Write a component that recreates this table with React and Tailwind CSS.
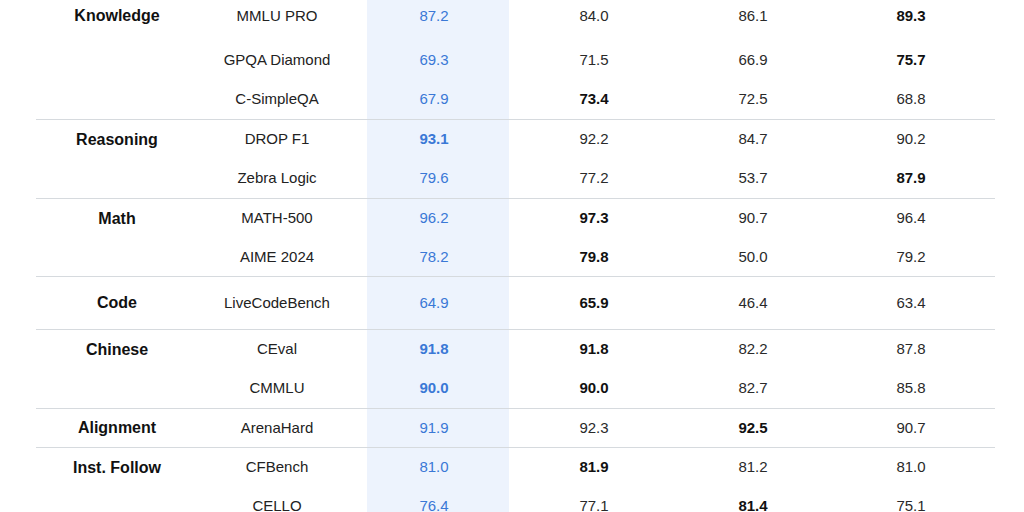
const groups = [
  {
    name: "Knowledge",
    rows: [
      { bench: "MMLU PRO", h: "h-[41px]", pad: "pb-[9px]", vals: ["87.2", "84.0", "86.1", "89.3"], bold: [3] },
      { bench: "GPQA Diamond", vals: ["69.3", "71.5", "66.9", "75.7"], bold: [3] },
      { bench: "C-SimpleQA", vals: ["67.9", "73.4", "72.5", "68.8"], bold: [1] },
    ],
  },
  {
    name: "Reasoning",
    rows: [
      { bench: "DROP F1", vals: ["93.1", "92.2", "84.7", "90.2"], bold: [0] },
      { bench: "Zebra Logic", vals: ["79.6", "77.2", "53.7", "87.9"], bold: [3] },
    ],
  },
  {
    name: "Math",
    rows: [
      { bench: "MATH-500", vals: ["96.2", "97.3", "90.7", "96.4"], bold: [1] },
      { bench: "AIME 2024", h: "h-[38px]", vals: ["78.2", "79.8", "50.0", "79.2"], bold: [1] },
    ],
  },
  {
    name: "Code",
    rows: [{ bench: "LiveCodeBench", h: "h-[52px]", vals: ["64.9", "65.9", "46.4", "63.4"], bold: [1] }],
  },
  {
    name: "Chinese",
    rows: [
      { bench: "CEval", vals: ["91.8", "91.8", "82.2", "87.8"], bold: [0, 1] },
      { bench: "CMMLU", vals: ["90.0", "90.0", "82.7", "85.8"], bold: [0, 1] },
    ],
  },
  {
    name: "Alignment",
    rows: [{ bench: "ArenaHard", h: "h-[38px]", vals: ["91.9", "92.3", "92.5", "90.7"], bold: [2] }],
  },
  {
    name: "Inst. Follow",
    last: true,
    rows: [
      { bench: "CFBench", vals: ["81.0", "81.9", "81.2", "81.0"], bold: [1] },
      { bench: "CELLO", vals: ["76.4", "77.1", "81.4", "75.1"], bold: [2] },
    ],
  },
];

const widths = ["w-[170px]", "w-[148px]", "w-[168px]"];

function Row({ row, name }) {
  const h = row.h || "h-[39px]";
  const pad = row.pad || "";
  return (
    <div className={`flex ${h}`}>
      <div className={`w-[162px] flex items-center justify-center ${pad} text-[16px] font-bold text-[#111]`}>
        {name}
      </div>
      <div className={`w-[158px] flex items-center justify-center ${pad} text-[15px] text-[#222]`}>{row.bench}</div>
      <div className="w-[11px]" />
      <div
        className={`w-[142px] bg-[#edf3fd] flex items-center justify-center ${pad} pr-[8px] text-[15px] text-[#3a78d6] ${
          row.bold.includes(0) ? "font-bold" : ""
        }`}
      >
        {row.vals[0]}
      </div>
      {row.vals.slice(1).map((v, i) => (
        <div
          key={i}
          className={`${widths[i]} flex items-center justify-center ${pad} text-[15px] ${
            row.bold.includes(i + 1) ? "font-bold text-[#111]" : "text-[#2a2a2a]"
          }`}
        >
          {v}
        </div>
      ))}
    </div>
  );
}

export default function App() {
  return (
    <div
      className="w-[1024px] h-[512px] overflow-hidden bg-white"
      style={{ fontFamily: '"Liberation Sans", Arial, sans-serif' }}
    >
      <div className="ml-[36px] w-[959px]">
        {groups.map((g) => (
          <div key={g.name} className={g.last ? "" : "border-b border-[#d6dade]"}>
            {g.rows.map((r, i) => (
              <Row key={r.bench} row={r} name={i === 0 ? g.name : ""} />
            ))}
          </div>
        ))}
      </div>
    </div>
  );
}
